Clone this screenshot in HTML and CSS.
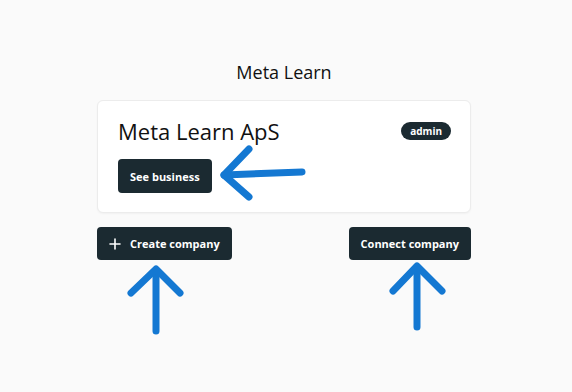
FILE: index.html
```html
<!DOCTYPE html>
<html>
    <head>
        <meta charset="UTF-8">
        <title>Meta Learn</title>
        <link rel="stylesheet" href="styles.css">
    </head>
    <body>
        <div class="page">
            <h2 class="page-title">Meta Learn</h2>

            <div class="card">
                <div class="card-head">
                    <h3 class="card-title">Meta Learn ApS</h3>
                    <span class="badge">admin</span>
                </div>
                <button class="btn">See business</button>
            </div>

            <div class="actions">
                <button class="btn btn-big">
                    <svg class="plus" width="12" height="12" viewBox="0 0 12 12">
                        <path d="M6 1v10M1 6h10" stroke="#fff" stroke-width="1.6" stroke-linecap="round"/>
                    </svg>
                    Create company
                </button>
                <button class="btn btn-big">Connect company</button>
            </div>
        </div>

        <!-- annotation arrows -->
        <svg class="arrows" width="572" height="392" viewBox="0 0 572 392">
            <g fill="none" stroke="#1478d2" stroke-width="7" stroke-linecap="round" stroke-linejoin="round">
                <path d="M302 172 L224 175"/>
                <path d="M249 149 L224 175 L249 197"/>
                <path d="M156 331 L156 270"/>
                <path d="M131 293 L156 269 L180 293"/>
                <path d="M417 327 L417 267"/>
                <path d="M393 291 L417 266 L442 291"/>
            </g>
        </svg>
    </body>
</html>
```

FILE: styles.css
```css
/* base */
* {
    box-sizing: border-box;
}

body {
    margin: 0;
    background-color: #fafafa;
    font-family: "Open Sans", "Noto Sans", sans-serif;
    color: #111;
}

.page {
    width: 374px;
    margin: 0 0 0 97px;
    padding-top: 58px;
}

.page-title {
    margin: 0;
    text-align: center;
    font-size: 18px;
    font-weight: 400;
    line-height: 28px;
}

.card {
    margin-top: 14px;
    background-color: #fff;
    border: 1px solid #ececec;
    border-radius: 6px;
    padding: 16px 19px 19px 20px;
    box-shadow: 0 1px 2px rgba(0, 0, 0, 0.04);
}

.card-head {
    display: flex;
    justify-content: space-between;
    align-items: center;
}

.card-title {
    margin: 0;
    font-size: 22px;
    font-weight: 400;
    line-height: 28px;
}

.badge {
    background-color: #1b2a31;
    color: #fff;
    font-size: 10px;
    font-weight: 700;
    padding: 2px 9px;
    border-radius: 9px;
    line-height: 14px;
}

/* buttons */
.btn {
    margin-top: 14px;
    background-color: #1b2a31;
    color: #fff;
    border: none;
    border-radius: 4px;
    font-family: inherit;
    font-size: 11px;
    font-weight: 700;
    height: 34px;
    padding: 0 12px;
    cursor: pointer;
}

.actions {
    display: flex;
    justify-content: space-between;
    margin-top: 14px;
}

.btn-big {
    margin-top: 0;
    height: 33px;
    padding: 0 12px;
    display: flex;
    align-items: center;
    gap: 9px;
}

.arrows {
    position: absolute;
    top: 0;
    left: 0;
    pointer-events: none;
}
```
